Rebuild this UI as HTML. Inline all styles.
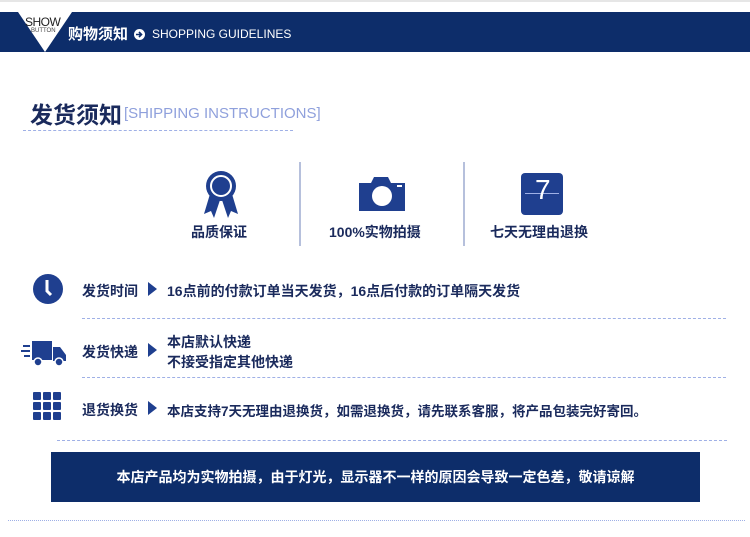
<!DOCTYPE html><html><head><meta charset="utf-8"><style>
body{margin:0;width:750px;height:537px;background:#fff;position:relative;overflow:hidden;font-family:"Liberation Sans","Noto Sans CJK SC",sans-serif;}
.a{position:absolute;white-space:nowrap}
.t{color:#1a2a5c;font-weight:bold;font-size:14px}
.dl{position:absolute;height:0;border-top:1px dashed #9fb0e6}
.ar{position:absolute;width:0;height:0;border-top:7px solid transparent;border-bottom:7px solid transparent;border-left:9px solid #1f3f8f}
</style></head><body>
<div class="a" style="left:0;top:0;width:750px;height:2px;background:#e6e6e6"></div>
<div class="a" style="left:0;top:12px;width:750px;height:40px;background:#0d2d6a"></div>
<svg class="a" style="left:16px;top:12px" width="58" height="41"><polygon points="2,0 56,0 29,40" fill="#fff"/></svg>
<div class="a" style="left:25px;top:15px;font-size:12px;color:#222;letter-spacing:-0.5px">SHOW</div>
<div class="a" style="left:31px;top:28px;font-size:6px;color:#444">BUTTON</div>
<div class="a" style="left:68px;top:23px;font-size:15px;color:#fff;font-weight:bold">购物须知</div>
<svg class="a" style="left:134px;top:29px" width="11" height="11"><circle cx="5.5" cy="5.5" r="5.5" fill="#fff"/><path d="M2 5.5h5M5 3l2.5 2.5L5 8" stroke="#0d2d6a" stroke-width="1.6" fill="none"/></svg>
<div class="a" style="left:152px;top:27px;font-size:12px;color:#fff">SHOPPING GUIDELINES</div>
<div class="a" style="left:30px;top:96px;font-size:23px;color:#1a2a5c;font-weight:bold">发货须知</div>
<div class="a" style="left:124px;top:105px;font-size:15px;color:#8fa0dc">[SHIPPING INSTRUCTIONS]</div>
<div class="dl" style="left:23px;top:130px;width:270px"></div>
<div class="a" style="left:299px;top:162px;width:2px;height:84px;background:#b6c0dc"></div>
<div class="a" style="left:463px;top:162px;width:2px;height:84px;background:#b6c0dc"></div>
<svg class="a" style="left:202px;top:170px" width="38" height="50"><path d="M8 24 L2 44 L9 41 L12 48 L18 30 Z M30 24 L36 44 L29 41 L26 48 L20 30 Z" fill="#1f3f8f"/><circle cx="19" cy="16" r="15" fill="#1f3f8f"/><circle cx="19" cy="16" r="10" fill="none" stroke="#fff" stroke-width="2"/></svg>
<div class="a t" style="left:191px;top:222px">品质保证</div>
<svg class="a" style="left:356px;top:175px" width="52" height="38"><path d="M3 8 h12 l3 -6 h14 l3 6 h14 v28 h-46 z" fill="#1f3f8f"/><circle cx="26" cy="21" r="10" fill="#fff"/><rect x="41" y="10" width="5" height="2" fill="#fff"/></svg>
<div class="a t" style="left:329px;top:222px">100%实物拍摄</div>
<div class="a" style="left:521px;top:173px;width:42px;height:42px;background:#1f3f8f;border-radius:4px"></div>
<div class="a" style="left:525px;top:193px;width:34px;height:1px;background:#9fb0e6"></div>
<div class="a" style="left:535px;top:174px;font-size:28px;color:#fff">7</div>
<div class="a t" style="left:490px;top:222px">七天无理由退换</div>
<svg class="a" style="left:32px;top:273px" width="32" height="32"><circle cx="16" cy="16" r="15" fill="#1f3f8f"/><path d="M15 7 v11 l4 4" stroke="#fff" stroke-width="3" fill="none"/></svg>
<div class="a t" style="left:82px;top:281px">发货时间</div><div class="ar" style="left:148px;top:282px"></div>
<div class="a t" style="left:167px;top:281px">16点前的付款订单当天发货，16点后付款的订单隔天发货</div>
<div class="dl" style="left:82px;top:318px;width:644px"></div>
<svg class="a" style="left:20px;top:338px" width="48" height="30"><rect x="3" y="7" width="7" height="2" fill="#1f3f8f"/><rect x="1" y="12" width="9" height="2" fill="#1f3f8f"/><rect x="4" y="17" width="6" height="2" fill="#1f3f8f"/><rect x="12" y="3" width="20" height="19" fill="#1f3f8f"/><path d="M33 9 h7 l6 8 v6 h-13z" fill="#1f3f8f"/><circle cx="18" cy="24" r="4" fill="#1f3f8f" stroke="#fff" stroke-width="1.5"/><circle cx="39" cy="24" r="4" fill="#1f3f8f" stroke="#fff" stroke-width="1.5"/></svg>
<div class="a t" style="left:82px;top:342px">发货快递</div><div class="ar" style="left:148px;top:343px"></div>
<div class="a t" style="left:167px;top:332px">本店默认快递</div>
<div class="a t" style="left:167px;top:352px">不接受指定其他快递</div>
<div class="dl" style="left:82px;top:377px;width:644px"></div>
<svg class="a" style="left:33px;top:392px" width="29" height="29"><g fill="#1f3f8f"><rect x="0" y="0" width="8" height="8" rx="1"/><rect x="10" y="0" width="8" height="8" rx="1"/><rect x="20" y="0" width="8" height="8" rx="1"/><rect x="0" y="10" width="8" height="8" rx="1"/><rect x="10" y="10" width="8" height="8" rx="1"/><rect x="20" y="10" width="8" height="8" rx="1"/><rect x="0" y="20" width="8" height="8" rx="1"/><rect x="10" y="20" width="8" height="8" rx="1"/><rect x="20" y="20" width="8" height="8" rx="1"/></g></svg>
<div class="a t" style="left:82px;top:400px">退货换货</div><div class="ar" style="left:148px;top:401px"></div>
<div class="a t" style="left:167px;top:400px;font-size:13.5px">本店支持7天无理由退换货，如需退换货，请先联系客服，将产品包装完好寄回。</div>
<div class="dl" style="left:57px;top:440px;width:670px"></div>
<div class="a" style="left:51px;top:452px;width:649px;height:50px;background:#0d2d6a"></div>
<div class="a" style="left:51px;top:467px;width:649px;text-align:center;font-size:14px;font-weight:bold;color:#fff">本店产品均为实物拍摄，由于灯光，显示器不一样的原因会导致一定色差，敬请谅解</div>
<div class="dl" style="left:8px;top:520px;width:737px;border-top-style:dotted"></div>
</body></html>
